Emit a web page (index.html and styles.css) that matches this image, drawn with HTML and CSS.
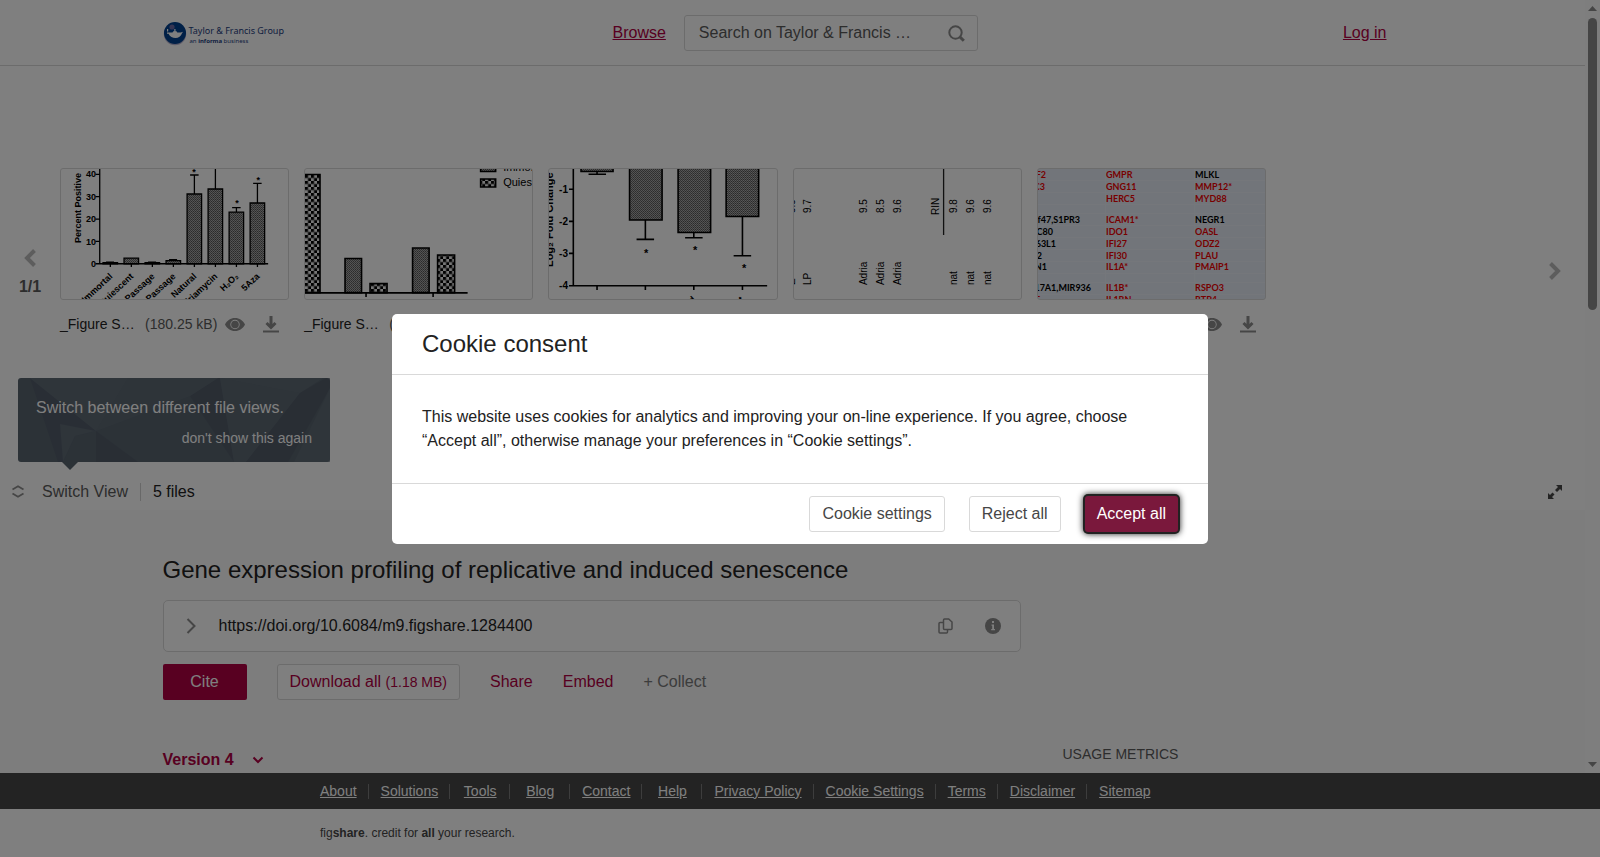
FILE: index.html
```html
<!DOCTYPE html>
<html lang="en">
<head>
    <meta charset="UTF-8">
    <title>Gene expression profiling of replicative and induced senescence</title>
    <link rel="stylesheet" href="styles.css">
</head>
<body>
    <svg class="defs" width="0" height="0" aria-hidden="true">
        <defs>
            <symbol id="i-eye" viewBox="0 0 20 13"><path fill-rule="evenodd" d="M10 0C5.500 0 2 2.500 0 6.500 2 10.500 5.500 13 10 13s8-2.500 10-6.500C18 2.500 14.500 0 10 0zm0 11.200a4.700 4.700 0 1 1 0-9.400 4.700 4.700 0 0 1 0 9.400z"/><circle cx="10" cy="6.500" r="3.800"/></symbol>
            <symbol id="i-down" viewBox="0 0 16 18"><path d="M0 15.500h16v2H0z"/><path d="M8 1v11M3.500 8 8 12.500 12.500 8" fill="none" stroke="currentColor" stroke-width="3"/></symbol>
            <symbol id="i-nav" viewBox="0 0 14 18"><path d="M2.500 1.500 10 9l-7.500 7.500" fill="none" stroke="currentColor" stroke-width="4"/></symbol>
            <pattern id="fine" width="2" height="2" patternUnits="userSpaceOnUse"><rect width="2" height="2" fill="#c4c4c4"/><path d="M0 0h1v1H0zM1 1h1v1H1z" fill="#444"/></pattern>
            <pattern id="check" width="6" height="6" patternUnits="userSpaceOnUse"><rect width="6" height="6" fill="#eee"/><path d="M0 0h3v3H0zM3 3h3v3H3z" fill="#000"/></pattern>
        </defs>
    </svg>
    <div class="page">
        <div class="scroller">
            <div class="content">
                <header class="top">
                    <div class="wrap top-row">
                        <a class="logo" href="#">
                            <svg width="24" height="25" viewBox="0 0 24 25" aria-hidden="true">
                                <circle cx="12" cy="13" r="11.200" fill="#b9b5d0"/>
                                <circle cx="12" cy="12" r="11" fill="#00408f"/>
                                <circle cx="9" cy="6" r="2.600" fill="#6c6aa5"/>
                                <path d="M4 11.500h5.500l.8-1.300h1V8h1.200v2.200h1l.8 1.300h3.500l2.200-.7-1 1.500c-1 3-3.500 4.700-6.500 4.700s-5.500-1.200-7-4.200H4zM4 8h1.200v2.600H4z" fill="#fff"/>
                            </svg>
                            <span class="logo-text"><span class="logo-name">Taylor &amp; Francis Group</span><span class="logo-sub">an <b>informa</b> business</span></span>
                        </a>
                        <div class="find">
                            <a href="#">Browse</a>
                            <form class="search">
                                <input type="text" aria-label="Search" placeholder="Search on Taylor &amp; Francis …">
                                <button type="button" aria-label="Run search"><svg width="17" height="17" viewBox="0 0 17 17"><circle cx="7.500" cy="7.500" r="6.200" fill="none" stroke="currentColor" stroke-width="2"/><path d="m12 12 3.800 3.800" stroke="currentColor" stroke-width="3"/></svg></button>
                            </form>
                        </div>
                        <a class="login" href="#">Log in</a>
                    </div>
                </header>

                <section class="viewer">
                    <div class="strip">
                        <div class="nav pager">
                            <button class="prev" type="button" aria-label="Previous files"><svg width="14" height="18"><use href="#i-nav"/></svg></button>
                            <span>1/1</span>
                        </div>
                        <ul class="files">
                            <li>
                                <div class="thumb">
                                    <svg viewBox="0 0 227 130" preserveAspectRatio="xMinYMin slice">
                                        <g fill="url(#fine)" stroke="#000" stroke-width="1.300">
                                            <path d="M42 93.500h14.500v1.200H42zM84 93.500h14.500v1.200H84z"/>
                                            <path d="M63 89h14.500v5.700H63zM105 91.500h14.500v3.200H105z"/>
                                            <path d="M126 25h14.500v69.700H126zM147 20h14.500v74.700H147zM168 43h14.500v51.700H168zM189 34h14.500v60.700H189z"/>
                                        </g>
                                        <path d="M38.700 0v94.700H207M34.500 5.300h4M34.500 27.700h4M34.500 50h4M34.500 72.300h4M34.500 94.700h4M49.300 95v3M70.300 95v3M91.300 95v3M112.300 95v3M133.300 95v3M154.300 95v3M175.300 95v3M196.300 95v3M133.300 25V6M129 6h8.500M154.300 20V0M175.300 43v-4.500M171 38.500h8.500M196.300 34V14.300M192 14.300h8.500M45 93h8M87 93h8M108 90.500h8" fill="none" stroke="#000" stroke-width="1.300"/>
                                        <g class="bold9" text-anchor="end">
                                            <text x="35" y="8">40</text><text x="35" y="31">30</text><text x="35" y="53">20</text><text x="35" y="76">10</text><text x="35" y="98">0</text>
                                        </g>
                                        <g class="bold9" text-anchor="middle"><text x="133" y="6">*</text><text x="176" y="37">*</text><text x="197" y="14">*</text></g>
                                        <text class="bold9" transform="translate(20 74) rotate(-90)">Percent Positive</text>
                                        <g class="bold9" text-anchor="end">
                                            <text transform="translate(52 108) rotate(-43)">Immortal</text>
                                            <text transform="translate(73 108) rotate(-43)">Quiescent</text>
                                            <text transform="translate(94 108) rotate(-43)">Passage</text>
                                            <text transform="translate(115 108) rotate(-43)">Passage</text>
                                            <text transform="translate(136 108) rotate(-43)">Natural</text>
                                            <text transform="translate(157 108) rotate(-43)">Adriamycin</text>
                                            <text transform="translate(178 108) rotate(-43)">H₂O₂</text>
                                            <text transform="translate(199 108) rotate(-43)">5Aza</text>
                                        </g>
                                    </svg>
                                </div>
                                <div class="cap"><span class="name">_Figure S…</span><span class="size">(180.25 kB)</span><button class="eye" type="button" aria-label="View"><svg width="20" height="13"><use href="#i-eye"/></svg></button><button class="down" type="button" aria-label="Download"><svg width="16" height="18"><use href="#i-down"/></svg></button></div>
                            </li>
                            <li>
                                <div class="thumb">
                                    <svg viewBox="0 0 227 130" preserveAspectRatio="xMinYMin slice">
                                        <g stroke="#000" stroke-width="1.600">
                                            <path d="M-2 5.500h17v118H-2zM65 114.500h17v9H65zM132.500 86h17v37.500h-17zM175.500 10h15v8h-15z" fill="url(#check)"/>
                                            <path d="M40 89.500h16.500v34H40zM107.500 79H124v44.500h-16.500zM175.500-4h15v6.500h-15z" fill="url(#fine)"/>
                                            <path d="M0 123.800h162.500M61 124v4M128 124v4" fill="none"/>
                                        </g>
                                        <g class="reg11"><text x="198" y="2">Immortal</text><text x="198" y="17">Quiescent</text></g>
                                    </svg>
                                </div>
                                <div class="cap"><span class="name">_Figure S…</span><span class="size">(168.11 kB)</span><button class="eye" type="button" aria-label="View"><svg width="20" height="13"><use href="#i-eye"/></svg></button><button class="down" type="button" aria-label="Download"><svg width="16" height="18"><use href="#i-down"/></svg></button></div>
                            </li>
                            <li>
                                <div class="thumb">
                                    <svg viewBox="0 0 227 130" preserveAspectRatio="xMinYMin slice">
                                        <g stroke="#000" stroke-width="1.600">
                                            <path d="M32-5h32V2.500H32zM80.500-5H113v56H80.500zM129-5h32.500v68.500H129zM177-5h32.500v52.500H177z" fill="url(#fine)"/>
                                            <path d="M24.300 0v116.700H218M20 20.300h4M20 52.300h4M20 84.300h4M20 116.700h4M48 117v4M96.300 117v4M144.700 117v4M193.300 117v4M48 2v3M39.500 5.300H57M96.300 51v19.300M87.500 70.300H105M144.700 63v5.500M136 68.700h17.500M193.300 47v39.500M184.500 86.700H202" fill="none"/>
                                        </g>
                                        <g class="bold10" text-anchor="end"><text x="19" y="24">-1</text><text x="19" y="56">-2</text><text x="19" y="88">-3</text><text x="19" y="120">-4</text></g>
                                        <g class="bold11" text-anchor="middle"><text x="97" y="88">*</text><text x="146" y="85">*</text><text x="195" y="103">*</text></g>
                                        <text class="bold11" transform="translate(4 98) rotate(-90)">Log₂ Fold Change</text>
                                        <g class="bold9" text-anchor="end"><text transform="translate(50 134) rotate(-43)">P2</text><text transform="translate(97 134) rotate(-43)">P</text><text transform="translate(147 131) rotate(-43)">Ad</text><text transform="translate(195 131) rotate(-43)">Nat</text></g>
                                    </svg>
                                </div>
                                <div class="cap"><span class="name">_Figure S…</span></div>
                            </li>
                            <li>
                                <div class="thumb">
                                    <svg viewBox="0 0 227 130" preserveAspectRatio="xMinYMin slice">
                                        <g class="reg10">
                                            <text transform="translate(1 44) rotate(-90)">9.9</text>
                                            <text transform="translate(17 44) rotate(-90)">9.7</text>
                                            <text transform="translate(73 44) rotate(-90)">9.5</text>
                                            <text transform="translate(90 44) rotate(-90)">8.5</text>
                                            <text transform="translate(107 44) rotate(-90)">9.6</text>
                                            <text transform="translate(145 46) rotate(-90)">RIN</text>
                                            <text transform="translate(163 44) rotate(-90)">9.8</text>
                                            <text transform="translate(180 44) rotate(-90)">9.6</text>
                                            <text transform="translate(197 44) rotate(-90)">9.6</text>
                                            <text transform="translate(1 116) rotate(-90)">E</text>
                                            <text transform="translate(17 116) rotate(-90)">LP</text>
                                            <text transform="translate(73 116) rotate(-90)">Adria</text>
                                            <text transform="translate(90 116) rotate(-90)">Adria</text>
                                            <text transform="translate(107 116) rotate(-90)">Adria</text>
                                            <text transform="translate(163 116) rotate(-90)">nat</text>
                                            <text transform="translate(180 116) rotate(-90)">nat</text>
                                            <text transform="translate(197 116) rotate(-90)">nat</text>
                                        </g>
                                        <path d="M149.500 0v66" stroke="#222" stroke-width="1.300"/>
                                    </svg>
                                </div>
                                <div class="cap"><span class="name">_Figure S…</span></div>
                            </li>
                            <li>
                                <div class="thumb genes">
                                    <svg viewBox="0 0 227 130" preserveAspectRatio="xMinYMin slice">
                                        <path d="M0 11.500h227M0 23.500h227M0 35.500h227M0 44.500h227M0 56.500h227M0 68.500h227M0 80.500h227M0 92.500h227M0 104.500h227M0 113.500h227M0 125.500h227M67.500 0v130M156.500 0v130" stroke="#eaeff7" fill="none"/>
                                        <g class="gene">
                                            <g text-anchor="end">
                                                <text class="up" x="8" y="9">IF2</text><text class="up" x="7" y="21">C3</text><text x="42" y="54">C1orf47,S1PR3</text><text x="15" y="66">C80</text><text x="18" y="78">63L1</text><text x="4" y="90">2</text><text x="9" y="101">N1</text><text x="53" y="122">17A1,MIR936</text><text class="up" x="2" y="134">F</text>
                                            </g>
                                            <g class="up">
                                                <text x="68" y="9">GMPR</text><text x="68" y="21">GNG11</text><text x="68" y="33">HERC5</text><text x="68" y="54">ICAM1*</text><text x="68" y="66">IDO1</text><text x="68" y="78">IFI27</text><text x="68" y="90">IFI30</text><text x="68" y="101">IL1A*</text><text x="68" y="122">IL1B*</text><text x="68" y="134">IL1RN</text>
                                                <text x="157" y="21">MMP12*</text><text x="157" y="33">MYD88</text><text x="157" y="66">OASL</text><text x="157" y="78">ODZ2</text><text x="157" y="90">PLAU</text><text x="157" y="101">PMAIP1</text><text x="157" y="122">RSPO3</text><text x="157" y="134">RTP4</text>
                                            </g>
                                            <text x="157" y="9">MLKL</text><text x="157" y="54">NEGR1</text>
                                        </g>
                                    </svg>
                                </div>
                                <div class="cap"><span class="name">_Figure S…</span><span class="size">(180.25 kB)</span><button class="eye" type="button" aria-label="View"><svg width="20" height="13"><use href="#i-eye"/></svg></button><button class="down" type="button" aria-label="Download"><svg width="16" height="18"><use href="#i-down"/></svg></button></div>
                            </li>
                        </ul>
                        <div class="nav">
                            <button type="button" aria-label="Next files"><svg width="14" height="18"><use href="#i-nav"/></svg></button>
                        </div>
                    </div>
                    <div class="bar">
                        <div class="tip">
                            <svg class="facets" viewBox="0 0 312 84" preserveAspectRatio="none" aria-hidden="true">
                                <path d="M12 0 78 53 57 58 45 84H40z" fill="#50586a"/>
                                <path d="M12 0H110L78 53z" fill="#64707a"/>
                                <path d="M42 46 78 53 57 58 45 84z" fill="#626e78"/>
                                <path d="M78 53V84H120zM200 0H202L216 84 172 18z" fill="#505866"/>
                                <path d="M78 53 172 18 200 0H110z" fill="#616d77"/>
                                <path d="M202 0H305L282 15z" fill="#64707a"/>
                                <path d="M202 0 282 15 228 84H216z" fill="#616d77"/>
                                <path d="M308 0 282 15 228 84H270L312 10V0z" fill="#505866"/>
                                <path d="M312 10V84H276z" fill="#626e78"/>
                            </svg>
                            <p>Switch between different file views.</p>
                            <button type="button">don't show this again</button>
                        </div>
                        <button class="switch" type="button"><svg width="12" height="13" viewBox="0 0 12 13"><path d="M.5 4.500 6 1.200l5.500 3.300M.5 8.500 6 11.800l5.500-3.300" fill="none" stroke="currentColor" stroke-width="1.800"/></svg>Switch View</button>
                        <span class="count">5 files</span>
                        <button class="full" type="button" aria-label="Full screen"><svg width="14" height="14" viewBox="0 0 14 14"><path d="M8 0h6v6l-2-2-3 3-2-2 3-3zM6 14H0V8l2 2 2.500-2.500 2 2L4 12z"/></svg></button>
                    </div>
                </section>

                <main class="item">
                    <div class="wrap">
                        <h1>Gene expression profiling of replicative and induced senescence</h1>
                        <div class="doi">
                            <button type="button" aria-label="Show citation"><svg width="10" height="16" viewBox="0 0 10 16"><path d="m1.500 1 7 7-7 7" fill="none" stroke="currentColor" stroke-width="2"/></svg></button>
                            <span>https://doi.org/10.6084/m9.figshare.1284400</span>
                            <button type="button" aria-label="Copy link"><svg width="15" height="16" viewBox="0 0 15 16"><path d="M6.500 1h4.200L14 4v6.500a1 1 0 0 1-1 1H6.500a1 1 0 0 1-1-1V2a1 1 0 0 1 1-1zM5 4.500H2a1 1 0 0 0-1 1V14a1 1 0 0 0 1 1h6.500a1 1 0 0 0 1-1v-2" fill="none" stroke="currentColor" stroke-width="1.500"/></svg></button>
                            <button type="button" aria-label="About this link"><svg width="16" height="16" viewBox="0 0 16 16"><circle cx="8" cy="8" r="8" fill="currentColor"/><path d="M6.500 6.500H9V11h1v1.200H6.200V11h1V7.700h-.7zM7 3h2v2H7z" fill="#fff"/></svg></button>
                        </div>
                        <div class="actions">
                            <button class="cite" type="button">Cite</button>
                            <a class="dl" href="#">Download all <small>(1.18 MB)</small></a>
                            <a href="#">Share</a>
                            <a href="#">Embed</a>
                            <button class="collect" type="button">+ Collect</button>
                        </div>
                        <div class="cols">
                            <button class="version" type="button">Version 4<svg width="12" height="8" viewBox="0 0 12 8"><path d="m1.500 1.500 4.500 4.500 4.500-4.500" fill="none" stroke="currentColor" stroke-width="2"/></svg></button>
                            <h2>USAGE METRICS</h2>
                        </div>
                    </div>
                </main>
            </div>
            <div class="track" aria-hidden="true">
                <svg width="9" height="5" viewBox="0 0 9 5"><path d="M4.500 0 9 5H0z"/></svg>
                <div class="thumb-bar"></div>
                <svg width="9" height="5" viewBox="0 0 9 5"><path d="M4.500 5 9 0H0z"/></svg>
            </div>
        </div>

        <footer>
            <nav class="links">
                <ul>
                    <li><a href="#">About</a></li>
                    <li><a href="#">Solutions</a></li>
                    <li><a href="#">Tools</a></li>
                    <li><a href="#">Blog</a></li>
                    <li><a href="#">Contact</a></li>
                    <li><a href="#">Help</a></li>
                    <li><a href="#">Privacy Policy</a></li>
                    <li><a href="#">Cookie Settings</a></li>
                    <li><a href="#">Terms</a></li>
                    <li><a href="#">Disclaimer</a></li>
                    <li><a href="#">Sitemap</a></li>
                </ul>
            </nav>
            <p class="credit">fig<b>share</b>. credit for <b>all</b> your research.</p>
        </footer>
    </div>

    <div class="overlay">
        <div class="modal" role="dialog" aria-modal="true" aria-labelledby="cookie-title">
            <h2 id="cookie-title">Cookie consent</h2>
            <p>This website uses cookies for analytics and improving your on-line experience. If you agree, choose “Accept all”, otherwise manage your preferences in “Cookie settings”.</p>
            <div class="choices">
                <button type="button">Cookie settings</button>
                <button type="button">Reject all</button>
                <button class="accept" type="button">Accept all</button>
            </div>
        </div>
    </div>
</body>
</html>
```
FILE: styles.css
```css
*{margin:0;padding:0;box-sizing:border-box;}
body{
    font-family:"Liberation Sans",Arial,sans-serif;
    font-size:16px;
    line-height:24px;
    color:#222;
    background:#fff;
}
ul{list-style:none;}
svg{display:block;fill:currentColor;}
.defs{position:absolute;}
a{color:#b00042;}
button{
    font:inherit;
    color:inherit;
    background:none;
    border:0;
    cursor:pointer;
}
.page{
    display:flex;
    flex-direction:column;
    height:100vh;
}
.scroller{
    flex:1;
    min-height:0;
    display:flex;
    overflow:hidden;
}
.content{
    flex:1;
    min-width:0;
}
.wrap{
    max-width:1260px;
    margin:0 auto;
}

/* scrollbar */
.track{
    width:15px;
    padding:6px 0;
    display:flex;
    flex-direction:column;
    align-items:center;
    justify-content:space-between;
    background:#fcfcfc;
    color:#8b8b8b;
}
.thumb-bar{
    width:9px;
    height:292px;
    margin:7px 0 auto;
    border-radius:5px;
    background:#8b8b8b;
}

/* header */
.top{
    padding:15px 0 14px;
    border-bottom:1px solid #d9d9d9;
}
.top-row{
    display:grid;
    grid-template-columns:450px auto 1fr;
    align-items:center;
}
.logo{
    display:flex;
    align-items:center;
    gap:2px;
    text-decoration:none;
    color:#1d3c80;
    font-family:"Noto Sans",sans-serif;
}
.logo-text{padding-top:4px;}
.logo-name{
    display:block;
    font-size:9px;
    line-height:12px;
}
.logo-sub{
    display:block;
    padding-left:1px;
    font-size:6px;
    line-height:8px;
}
.find{
    display:flex;
    align-items:center;
    gap:18px;
}
.search{
    display:flex;
    align-items:center;
    width:294px;
    height:36px;
    padding:0 12px 0 14px;
    border:1px solid #d9d9d9;
    border-radius:3px;
    color:#8c8c8c;
}
.search input{
    flex:1;
    min-width:0;
    border:0;
    outline:0;
    background:none;
    font:inherit;
}
.search input::placeholder{color:#5a5a5a;opacity:1;}
.login{
    justify-self:end;
    margin-right:36px;
}

/* file viewer */
.strip{
    display:flex;
    align-items:center;
    padding:102px 0;
}
.nav{
    width:60px;
    flex:none;
    display:flex;
    flex-direction:column;
    align-items:center;
    gap:8px;
    color:#bbb;
}
.pager{padding-top:7px;}
.nav span{
    font-weight:bold;
    color:#5a5a5a;
}
.prev svg{transform:scaleX(-1);}
.files{
    flex:1;
    display:grid;
    grid-template-columns:repeat(6,1fr);
    gap:15px;
    padding-right:15px;
}
.files li{
    min-width:0;
    padding-bottom:25px;
}
.thumb{
    height:132px;
    border:1px solid #d9d9d9;
    border-radius:3px;
    overflow:hidden;
}
.thumb svg{
    width:100%;
    height:100%;
    fill:#000;
}
.genes{background:#e4ebf5;}
.bold9{font-size:9px;font-weight:bold;}
.bold10{font-size:10px;font-weight:bold;}
.bold11{font-size:11px;font-weight:bold;}
.reg10{font-size:10px;}
.reg11{font-size:11px;}
.gene{
    font-family:Lato,sans-serif;
    font-size:9px;
    font-weight:bold;
}
.up{fill:#f00000;}
.cap{
    display:flex;
    align-items:center;
    height:48px;
    font-size:14px;
    color:#8c8c8c;
}
.name{
    width:85px;
    color:#222;
}
.size{color:#5a5a5a;}
.eye{margin-left:8px;}
.down{margin-left:18px;}
.bar{
    position:relative;
    display:flex;
    align-items:center;
    height:35px;
    padding:0 23px 2px 12px;
}
.tip{
    position:absolute;
    left:18px;
    bottom:48px;
    width:312px;
    height:84px;
    padding:18px;
    border-radius:3px;
    background:#58646f;
    color:#fff;
}
.tip::after{
    content:"";
    position:absolute;
    left:44px;
    bottom:-8px;
    border:8px solid transparent;
    border-top-color:#58646f;
    border-bottom:0;
}
.facets{
    position:absolute;
    left:0;
    top:0;
    width:100%;
    height:100%;
    opacity:.6;
}
.tip p{position:relative;}
.tip button{
    position:relative;
    display:block;
    margin:6px 0 0 auto;
    font-size:14px;
    line-height:24px;
}
.switch{
    display:flex;
    align-items:center;
    gap:18px;
    color:#5a5a5a;
}
.switch svg{color:#8c8c8c;}
.count{
    margin-left:12px;
    padding-left:12px;
    line-height:18px;
    border-left:1px solid #d0d0d0;
}
.full{margin-left:auto;color:#464646;}

/* item */
.item{
    padding-top:45px;
    min-height:400px;
    background:#fafafa;
}
.item h1{
    font-size:24px;
    line-height:30px;
    font-weight:normal;
}
.doi{
    display:flex;
    align-items:center;
    max-width:858px;
    height:52px;
    margin:15px 0 12px;
    padding:0 19px 0 22px;
    border:1px solid #d9d9d9;
    border-radius:5px;
    background:#fff;
    color:#8c8c8c;
}
.doi span{
    flex:1;
    padding-left:23px;
    color:#222;
}
.doi button + button{margin-left:32px;}
.actions{
    display:flex;
    align-items:center;
    gap:30px;
}
.actions a{text-decoration:none;}
.cite{
    width:84px;
    height:36px;
    border-radius:2px;
    background:#b00042;
    color:#fff;
}
.dl{
    padding:5px 12px;
    border:1px solid #d9d9d9;
    border-radius:3px;
    background:#fff;
}
.dl small{font-size:14px;}
.collect{color:#787878;}
.cols{
    display:grid;
    grid-template-columns:minmax(0,858px) 1fr;
    column-gap:42px;
    align-items:start;
    margin-top:44px;
}
.version{
    display:flex;
    align-items:center;
    gap:18px;
    padding-top:4px;
    font-weight:bold;
    color:#b00042;
}
.cols h2{
    font-size:14px;
    line-height:20px;
    font-weight:normal;
    color:#5a5a5a;
}

/* footer */
.links{
    background:#464646;
    font-size:14px;
}
.links ul{
    display:flex;
    align-items:center;
    max-width:960px;
    height:36px;
    margin:0 auto;
}
.links li{
    flex:none;
    min-width:60px;
    padding:0 11px 0 12px;
    line-height:15px;
    text-align:center;
    border-right:1px solid #7a7a7a;
}
.links li:first-child{min-width:0;padding-left:0;}
.links li:last-child{border:0;}
.links a{color:#fff;}
.credit{
    max-width:960px;
    margin:0 auto;
    padding:12px 0;
    font-size:12px;
    color:#464646;
}

/* cookie dialog */
.overlay{
    position:fixed;
    inset:0;
    display:flex;
    align-items:center;
    justify-content:center;
    background:rgba(0,0,0,.5);
}
.modal{
    width:816px;
    border-radius:5px;
    background:#fff;
}
.modal h2{
    padding:15px 30px;
    font-size:24px;
    line-height:30px;
    font-weight:normal;
}
.modal p{
    padding:30px;
    border:solid #d9d9d9;
    border-width:1px 0;
}
.choices{
    display:flex;
    justify-content:flex-end;
    gap:24px;
    padding:12px 30px;
}
.choices button{
    height:36px;
    padding:0 12px;
    border:1px solid #d9d9d9;
    border-radius:3px;
    color:#464646;
}
.choices .accept{
    border:0;
    background:#7a183c;
    color:#fff;
    box-shadow:0 0 0 2px #222,0 0 6px 2px #222;
}
```
